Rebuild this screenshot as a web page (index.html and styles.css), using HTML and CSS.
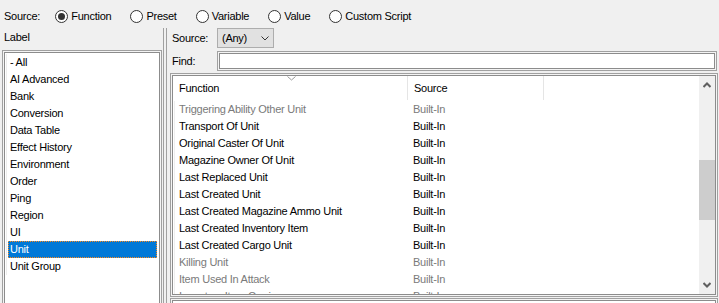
FILE: index.html
```html
<!DOCTYPE html>
<html lang="en">
<head>
  <meta charset="UTF-8" />
  <title>Select Function</title>
  <link rel="stylesheet" href="styles.css">
</head>
<body>

  <div class="topbar">
    <span class="caption">Source:</span>
    <label class="radio checked"><span class="circle"></span>Function</label>
    <label class="radio"><span class="circle"></span>Preset</label>
    <label class="radio"><span class="circle"></span>Variable</label>
    <label class="radio"><span class="circle"></span>Value</label>
    <label class="radio"><span class="circle"></span>Custom Script</label>
  </div>

  <div class="main">
    <div class="left">
      <div class="label">Label</div>
      <div class="listbox">
        <ul class="items">
          <li>- All</li>
          <li>AI Advanced</li>
          <li>Bank</li>
          <li>Conversion</li>
          <li>Data Table</li>
          <li>Effect History</li>
          <li>Environment</li>
          <li>Order</li>
          <li>Ping</li>
          <li>Region</li>
          <li>UI</li>
          <li class="selected">Unit</li>
          <li>Unit Group</li>
        </ul>
      </div>
    </div>

    <div class="splitter"></div>

    <div class="right">
      <div class="field">
        <span class="field-label">Source:</span>
        <div class="combo">
          <span>(Any)</span>
          <svg width="8" height="5" viewBox="0 0 8 5"><path d="M0.5 0.5 L4 4 L7.5 0.5" fill="none" stroke="#333" stroke-width="1"/></svg>
        </div>
      </div>
      <div class="field find">
        <span class="field-label">Find:</span>
        <div class="textbox"></div>
      </div>

      <div class="grid">
        <div class="grid-view">
          <div class="grid-head">
            <div class="col-func">
              Function
              <svg class="sort" width="9" height="5" viewBox="0 0 9 5"><path d="M0.5 0.5 L4.5 4 L8.5 0.5" fill="none" stroke="#9a9a9a" stroke-width="1"/></svg>
            </div>
            <div class="col-src">Source</div>
            <div class="col-rest"></div>
          </div>
          <div class="grid-body" id="rows"></div>
        </div>
        <div class="vscroll">
          <svg width="8" height="6" viewBox="0 0 8 6"><path d="M0.5 5 L4 1.5 L7.5 5" fill="none" stroke="#606060" stroke-width="2"/></svg>
          <div class="track">
            <div class="thumb"></div>
          </div>
          <svg width="8" height="6" viewBox="0 0 8 6"><path d="M0.5 1 L4 4.5 L7.5 1" fill="none" stroke="#606060" stroke-width="2"/></svg>
        </div>
      </div>

      <div class="details"></div>
    </div>
  </div>

  <script>
    const functions = [
      { name: 'Triggering Ability Other Unit', off: true },
      { name: 'Transport Of Unit' },
      { name: 'Original Caster Of Unit' },
      { name: 'Magazine Owner Of Unit' },
      { name: 'Last Replaced Unit' },
      { name: 'Last Created Unit' },
      { name: 'Last Created Magazine Ammo Unit' },
      { name: 'Last Created Inventory Item' },
      { name: 'Last Created Cargo Unit' },
      { name: 'Killing Unit', off: true },
      { name: 'Item Used In Attack', off: true },
      { name: 'Inventory Item Carrier', off: true }
    ];

    const rows = document.getElementById('rows');
    functions.forEach(fn => {
      const row = `<div class="row${fn.off ? ' off' : ''}">
        <div class="col-func">${fn.name}</div>
        <div class="col-src">Built-In</div>
      </div>`;
      rows.insertAdjacentHTML('beforeend', row);
    });
  </script>

</body>
</html>
```

FILE: styles.css
```css
body {
  margin: 0;
  width: 719px;
  height: 303px;
  overflow: hidden;
  background-color: #f0f0f0;
  color: #000;
  font-family: "Liberation Sans", Arial, sans-serif;
  font-size: 11px;
  letter-spacing: -0.25px;
}

/* top radio strip */
.topbar {
  height: 22px;
  padding: 5px 0 0 4px;
  display: flex;
  align-items: center;
  gap: 19px;
}

.caption {
  margin-right: -4px;
}

.radio {
  display: flex;
  align-items: center;
  gap: 3px;
}

.circle {
  width: 11px;
  height: 11px;
  border: 1px solid #333;
  border-radius: 50%;
  background-color: #fff;
  display: flex;
  align-items: center;
  justify-content: center;
}

.radio.checked .circle::after {
  content: "";
  width: 7px;
  height: 7px;
  border-radius: 50%;
  background-color: #333;
}

.main {
  display: flex;
  height: 276px;
  overflow: hidden;
}

/* left label list */
.left {
  width: 163px;
  flex-shrink: 0;
}

.label {
  height: 19px;
  padding: 4px 0 0 4px;
  line-height: 13px;
}

.listbox,
.textbox,
.grid,
.details {
  border: 1px solid #a0a0a0;
  box-shadow: inset 0 0 0 1px #f4f4f4, inset 0 0 0 2px #8c8c8c;
  background-color: #fff;
}

.listbox {
  margin-left: 2px;
  width: 154px;
  height: 270px;
  padding: 3px 2px 0 2px;
}

.items {
  list-style: none;
  margin: 0 0 0 1px;
  padding: 0 0 0 1px;
  border-left: 1px solid #ececec;
}

.items li {
  height: 17px;
  line-height: 17px;
  padding-left: 2px;
  margin-right: 2px;
}

.items li.selected {
  background-color: #0078d7;
  color: #fff;
  outline: 1px dotted #ff8a1c;
  outline-offset: -1px;
}

.splitter {
  margin-top: 1px;
  width: 2px;
  flex-shrink: 0;
  border-left: 1px solid #a0a0a0;
  border-right: 1px solid #a0a0a0;
}

/* right side */
.right {
  flex: 1;
  padding: 1px 1px 0 3px;
  display: flex;
  flex-direction: column;
}

.field {
  display: flex;
  align-items: center;
  height: 20px;
  flex-shrink: 0;
}

.field.find {
  margin-top: 3px;
}

.field-label {
  width: 45px;
  padding-left: 2px;
}

.combo {
  box-sizing: border-box;
  width: 57px;
  height: 20px;
  padding: 0 4px;
  background-color: #e1e1e1;
  border: 1px solid #adadad;
  display: flex;
  align-items: center;
  justify-content: space-between;
}

.textbox {
  flex: 1;
  height: 18px;
  margin-right: 1px;
}

.grid {
  margin-top: 2px;
  height: 218px;
  flex-shrink: 0;
  padding: 2px;
  display: flex;
  overflow: hidden;
}

.grid-view {
  flex: 1;
  overflow: hidden;
}

.grid-head {
  display: flex;
  height: 24px;
  line-height: 24px;
}

.grid-head .col-func {
  position: relative;
  width: 228px;
  padding-left: 6px;
  border-right: 1px solid #e5e5e5;
}

.sort {
  position: absolute;
  top: 0;
  left: 114px;
}

.grid-head .col-src {
  width: 129px;
  padding-left: 6px;
  border-right: 1px solid #e5e5e5;
}

.grid-body {
  margin-left: 1px;
  border-left: 1px solid #eeeeee;
}

.row {
  display: flex;
  height: 17px;
  line-height: 17px;
}

.row:first-child {
  margin-top: 1px;
}

.row .col-func {
  width: 228px;
  padding-left: 4px;
}

.row .col-src {
  padding-left: 6px;
}

.row.off {
  color: #7a7a7a;
}

.vscroll {
  width: 16px;
  background-color: #f0f0f0;
  display: flex;
  flex-direction: column;
  align-items: center;
  padding: 6px 0 6px 0;
}

.track {
  flex: 1;
  width: 100%;
  padding-top: 72px;
}

.thumb {
  height: 60px;
  background-color: #cdcdcd;
}

.details {
  margin-top: 1px;
  height: 20px;
  flex-shrink: 0;
}
```
